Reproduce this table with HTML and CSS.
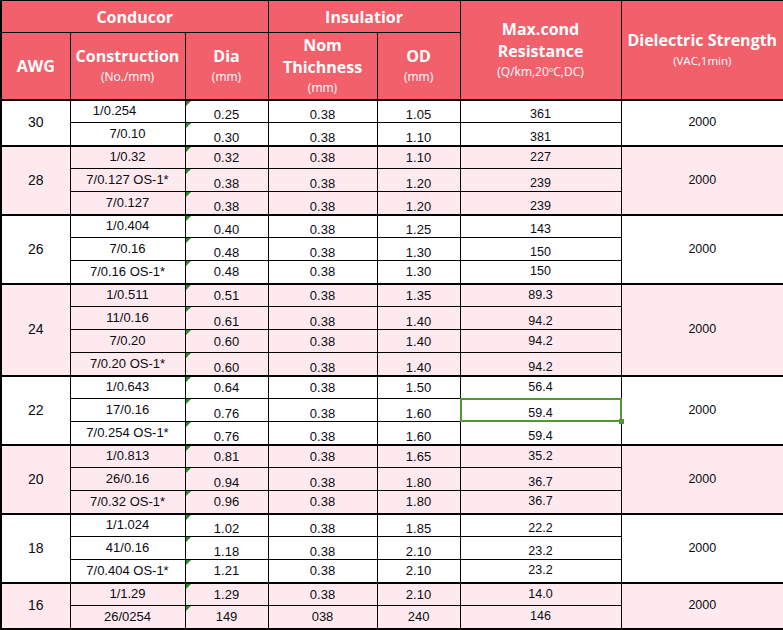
FILE: index.html
```html
<!DOCTYPE html>
<html>
<head>
<meta charset="utf-8">
<link rel="stylesheet" href="styles.css">
</head>
<body>
<table class="spec">
  <colgroup>
    <col class="c-awg"><col class="c-con"><col class="c-dia"><col class="c-nom"><col class="c-od"><col class="c-res"><col class="c-die">
  </colgroup>
  <thead>
    <tr class="h1">
      <th colspan="3">Conducor</th>
      <th colspan="2">Insulatior</th>
      <th rowspan="2">Max.cond<br>Resistance<span class="sub">(Q/km,20ºC,DC)</span></th>
      <th rowspan="2">Dielectric Strength<span class="sub sub-d">(VAC,1min)</span></th>
    </tr>
    <tr class="h2">
      <th class="awg-h">AWG</th>
      <th>Construction<span class="sub">(No./mm)</span></th>
      <th>Dia<span class="sub">(mm)</span></th>
      <th>Nom<br>Thichness<span class="sub">(mm)</span></th>
      <th>OD<span class="sub">(mm)</span></th>
    </tr>
  </thead>
  <tbody class="grp">
    <tr class="b"><td class="awg" rowspan="2">30</td><td class="con shift">1/0.254</td><td class="num dia">0.25</td><td class="num">0.38</td><td class="num">1.05</td><td class="num res">361</td><td class="die" rowspan="2">2000</td></tr>
    <tr class="b"><td class="con">7/0.10</td><td class="num dia">0.30</td><td class="num">0.38</td><td class="num">1.10</td><td class="num res">381</td></tr>
  </tbody>
  <tbody class="grp pink">
    <tr><td class="awg" rowspan="3">28</td><td class="con">1/0.32</td><td class="num dia">0.32</td><td class="num">0.38</td><td class="num">1.10</td><td class="num res">227</td><td class="die" rowspan="3">2000</td></tr>
    <tr class="b"><td class="con">7/0.127 OS-1*</td><td class="num dia">0.38</td><td class="num">0.38</td><td class="num">1.20</td><td class="num res">239</td></tr>
    <tr class="b"><td class="con">7/0.127</td><td class="num dia">0.38</td><td class="num">0.38</td><td class="num">1.20</td><td class="num res">239</td></tr>
  </tbody>
  <tbody class="grp">
    <tr class="b"><td class="awg" rowspan="3">26</td><td class="con">1/0.404</td><td class="num dia">0.40</td><td class="num">0.38</td><td class="num">1.25</td><td class="num res">143</td><td class="die" rowspan="3">2000</td></tr>
    <tr class="b"><td class="con">7/0.16</td><td class="num dia">0.48</td><td class="num">0.38</td><td class="num">1.30</td><td class="num res">150</td></tr>
    <tr><td class="con">7/0.16 OS-1*</td><td class="num dia">0.48</td><td class="num">0.38</td><td class="num">1.30</td><td class="num res">150</td></tr>
  </tbody>
  <tbody class="grp pink">
    <tr><td class="awg" rowspan="4">24</td><td class="con">1/0.511</td><td class="num dia">0.51</td><td class="num">0.38</td><td class="num">1.35</td><td class="num res">89.3</td><td class="die" rowspan="4">2000</td></tr>
    <tr class="b"><td class="con">11/0.16</td><td class="num dia">0.61</td><td class="num">0.38</td><td class="num">1.40</td><td class="num res">94.2</td></tr>
    <tr><td class="con">7/0.20</td><td class="num dia">0.60</td><td class="num">0.38</td><td class="num">1.40</td><td class="num res">94.2</td></tr>
    <tr class="b"><td class="con">7/0.20 OS-1*</td><td class="num dia">0.60</td><td class="num">0.38</td><td class="num">1.40</td><td class="num res">94.2</td></tr>
  </tbody>
  <tbody class="grp">
    <tr><td class="awg" rowspan="3">22</td><td class="con">1/0.643</td><td class="num dia">0.64</td><td class="num">0.38</td><td class="num">1.50</td><td class="num res">56.4</td><td class="die" rowspan="3">2000</td></tr>
    <tr class="b"><td class="con">17/0.16</td><td class="num dia">0.76</td><td class="num">0.38</td><td class="num">1.60</td><td class="num res sel">59.4</td></tr>
    <tr class="b"><td class="con">7/0.254 OS-1*</td><td class="num dia">0.76</td><td class="num">0.38</td><td class="num">1.60</td><td class="num res">59.4</td></tr>
  </tbody>
  <tbody class="grp pink">
    <tr><td class="awg" rowspan="3">20</td><td class="con">1/0.813</td><td class="num dia">0.81</td><td class="num">0.38</td><td class="num">1.65</td><td class="num res">35.2</td><td class="die" rowspan="3">2000</td></tr>
    <tr class="b"><td class="con">26/0.16</td><td class="num dia">0.94</td><td class="num">0.38</td><td class="num">1.80</td><td class="num res">36.7</td></tr>
    <tr><td class="con">7/0.32 OS-1*</td><td class="num dia">0.96</td><td class="num">0.38</td><td class="num">1.80</td><td class="num res">36.7</td></tr>
  </tbody>
  <tbody class="grp">
    <tr class="b"><td class="awg" rowspan="3">18</td><td class="con">1/1.024</td><td class="num dia">1.02</td><td class="num">0.38</td><td class="num">1.85</td><td class="num res">22.2</td><td class="die" rowspan="3">2000</td></tr>
    <tr class="b"><td class="con">41/0.16</td><td class="num dia">1.18</td><td class="num">0.38</td><td class="num">2.10</td><td class="num res">23.2</td></tr>
    <tr><td class="con">7/0.404 OS-1*</td><td class="num dia">1.21</td><td class="num">0.38</td><td class="num">2.10</td><td class="num res">23.2</td></tr>
  </tbody>
  <tbody class="grp pink">
    <tr><td class="awg" rowspan="2">16</td><td class="con">1/1.29</td><td class="num dia">1.29</td><td class="num">0.38</td><td class="num">2.10</td><td class="num res">14.0</td><td class="die" rowspan="2">2000</td></tr>
    <tr><td class="con">26/0254</td><td class="num dia">149</td><td class="num">038</td><td class="num">240</td><td class="num res">146</td></tr>
  </tbody>
</table>
</body>
</html>
```

FILE: styles.css
```css
html, body {
  margin: 0;
  padding: 0;
  background: #ffffff;
}

.spec {
  border-collapse: collapse;
  table-layout: fixed;
  width: 783px;
  border-top: 1px solid #000;
  border-left: 2px solid #000;
  border-right: 2px solid #000;
  border-bottom: 2px solid #000;
  font-family: "Liberation Sans", Arial, sans-serif;
  color: #000;
}

.c-awg { width: 69px; }
.c-con { width: 115px; }
.c-dia { width: 83px; }
.c-nom { width: 109px; }
.c-od  { width: 83px; }
.c-res { width: 161px; }
.c-die { width: 163px; }

.spec th {
  background: #f2606b;
  color: #ffffff;
  font-family: "Open Sans", "Noto Sans", sans-serif;
  font-weight: 700;
  font-size: 16px;
  line-height: 22px;
  border: 1px solid #000;
  padding: 0;
  text-align: center;
  vertical-align: middle;
}

.h1 { height: 32px; }
.h2 { height: 67px; }
.h2 th { border-bottom: 2px solid #000; }
.spec thead th[rowspan] { border-bottom: 2px solid #000; }

.sub {
  display: block;
  font-weight: 400;
  font-size: 12px;
  line-height: 20px;
}

.sub-d { font-size: 11.5px; }

.awg-h { padding-top: 2px; }

.spec tbody tr { height: 23px; }

.grp { border-top: 2px solid #000; }

.spec td {
  border: 1px solid #000;
  padding: 0;
  text-align: center;
  vertical-align: middle;
  font-size: 13px;
  line-height: 15px;
  white-space: nowrap;
  color: #0a0a14;
}

.spec tr.b td.num {
  vertical-align: bottom;
}

.pink td { background: #feeaee; }

.spec td.con {
  font-size: 13px;
  padding-bottom: 1px;
}

.spec td.shift { padding-right: 26px; }

.spec td.awg {
  font-size: 14px;
}

.spec td.res { font-size: 12.5px; }

.spec td.die {
  font-size: 12.5px;
}

.spec td.dia { position: relative; }
.spec td.dia::before {
  content: "";
  position: absolute;
  left: 0;
  top: 0;
  width: 0;
  height: 0;
  border-top: 5px solid #2a8a24;
  border-right: 5px solid transparent;
}

.spec td.sel { position: relative; }
.spec td.sel::after {
  content: "";
  position: absolute;
  left: -1px;
  top: -1px;
  right: -1px;
  bottom: -1px;
  border: 2px solid #4f9a2e;
}
.spec td.sel::before {
  content: "";
  position: absolute;
  right: -3px;
  bottom: -3px;
  width: 5px;
  height: 5px;
  background: #4f9a2e;
  z-index: 2;
}
```
